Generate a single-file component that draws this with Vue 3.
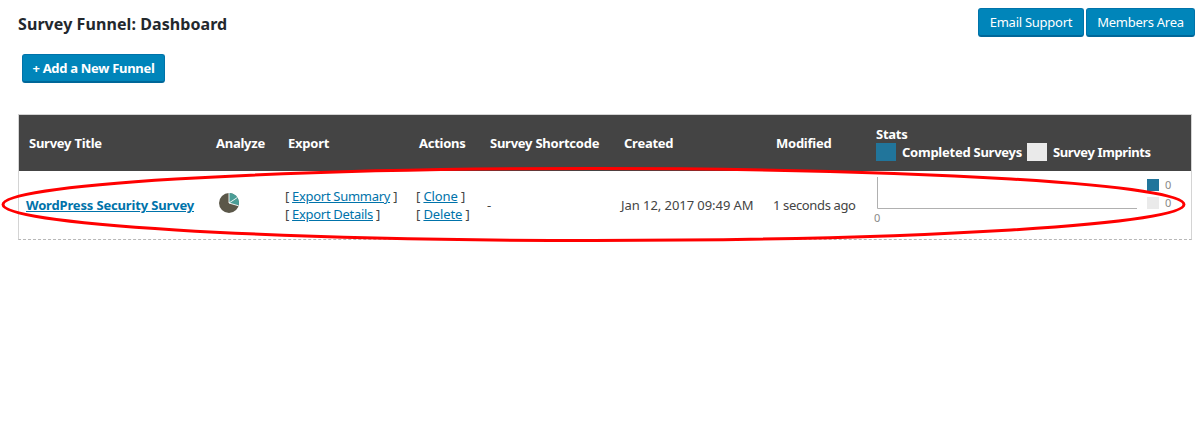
<script setup>
const columns = [
  { label: 'Survey Title', width: 187 },
  { label: 'Analyze', width: 72 },
  { label: 'Export', width: 131 },
  { label: 'Actions', width: 71 },
  { label: 'Survey Shortcode', width: 134 },
  { label: 'Created', width: 152 },
  { label: 'Modified', width: 100 },
]
</script>

<template>
  <div class="page">
    <header class="top">
      <h1 class="title">Survey Funnel: Dashboard</h1>
      <div class="top-actions">
        <a class="btn btn-email" href="#">Email Support</a>
        <a class="btn btn-members" href="#">Members Area</a>
      </div>
    </header>
    <div class="add-row">
      <a class="btn btn-strong" href="#">+ Add a New Funnel</a>
    </div>
    <div class="table-wrap">
      <table class="funnels">
        <colgroup>
          <col v-for="c in columns" :key="c.label" :style="{ width: c.width + 'px' }" />
          <col />
        </colgroup>
        <thead>
          <tr>
            <th v-for="c in columns" :key="c.label">{{ c.label }}</th>
            <th class="stats-head">
              <div>Stats</div>
              <div class="legend">
                <span class="swatch swatch-blue"></span><span class="legend-a">Completed Surveys</span>
                <span class="swatch swatch-grey"></span><span class="legend-b">Survey Imprints</span>
              </div>
            </th>
          </tr>
        </thead>
        <tbody>
          <tr>
            <td><a class="survey-link" href="#">WordPress Security Survey</a></td>
            <td class="pie-cell">
              <svg class="pie" width="22" height="22" viewBox="0 0 22 22">
                <circle cx="11" cy="11" r="10" fill="#5b5749" />
                <path d="M11 11 L11 1 A10 10 0 0 1 20.6 13.8 Z" fill="#4a9d96" />
                <path d="M11 1 V11 L19.2 5.6 M11 11 L20.6 13.8" fill="none" stroke="#fff" stroke-width="0.9" />
              </svg>
            </td>
            <td class="links">
              <div>[ <a href="#">Export Summary</a> ]</div>
              <div>[ <a href="#">Export Details</a> ]</div>
            </td>
            <td class="links links-wide">
              <div>[ <a href="#">Clone</a> ]</div>
              <div>[ <a href="#">Delete</a> ]</div>
            </td>
            <td>-</td>
            <td class="created">Jan 12, 2017 09:49 AM</td>
            <td class="modified">1 seconds ago</td>
            <td class="chart-cell">
              <svg class="chart" width="316" height="50" viewBox="0 0 316 50">
                <path d="M1.5 -3 V28.5 H261" fill="none" stroke="#b0b0b0" stroke-width="1" />
                <text x="-2" y="42" class="tick">0</text>
                <rect x="271" y="-1" width="12" height="12" fill="#21759b" />
                <rect x="271" y="17" width="12" height="12" fill="#eaeaea" />
                <text x="289" y="9" class="tick">0</text>
                <text x="289" y="27" class="tick">0</text>
              </svg>
            </td>
          </tr>
        </tbody>
      </table>
    </div>
    <svg class="annotation" width="1196" height="443" viewBox="0 0 1196 443">
      <ellipse cx="593.5" cy="204.5" rx="590.5" ry="36" fill="none" stroke="#f00" stroke-width="3" />
    </svg>
  </div>
</template>

<style scoped>
.page {
  position: relative;
  width: 1196px;
  height: 443px;
  overflow: hidden;
  background: #fff;
  color: #444;
  font-family: "Noto Sans", "Open Sans", sans-serif;
  font-size: 13px;
}
.top {
  display: flex;
  justify-content: space-between;
  align-items: flex-start;
  padding: 8px 1px 0 18px;
}
.title {
  margin: 5px 0 0;
  font-size: 16px;
  line-height: 22px;
  font-weight: 700;
  color: #23282d;
  letter-spacing: 0.08px;
}
.top-actions {
  display: flex;
  gap: 2px;
}
.btn {
  display: block;
  box-sizing: border-box;
  height: 29px;
  line-height: 27px;
  background: #0085ba;
  border: 1px solid #0073aa;
  border-bottom: 2px solid #006799;
  border-radius: 3px;
  color: #fff;
  font-size: 13px;
  text-align: center;
  text-decoration: none;
  white-space: nowrap;
  letter-spacing: -0.26px;
}
.btn-email { width: 106px; }
.btn-members { width: 109px; }
.btn-strong {
  font-weight: 700;
  width: 143px;
  letter-spacing: -0.3px;
}
.add-row {
  display: flex;
  padding: 17px 0 0 22px;
}
.table-wrap {
  margin: 31px 4px 0 18px;
  border: 1px solid #d4d4d4;
  border-bottom: 1px dashed #b8b8b8;
}
.funnels {
  width: 100%;
  table-layout: fixed;
  border-collapse: collapse;
}
th {
  height: 56px;
  box-sizing: border-box;
  padding: 0 0 0 10px;
  background: #444;
  color: #fff;
  font-size: 13px;
  font-weight: 700;
  text-align: left;
  white-space: nowrap;
  letter-spacing: -0.25px;
}
.stats-head {
  padding-bottom: 1px;
  line-height: 18px;
}
.legend {
  display: flex;
  align-items: center;
  height: 18px;
}
.swatch {
  flex: none;
  width: 20px;
  height: 18px;
}
.swatch-blue { background: #21759b; }
.swatch-grey { background: #eaeaea; }
.legend-a { margin: 0 5px 0 6px; width: 120px; }
.legend-b { margin-left: 6px; letter-spacing: -0.38px; }
td {
  height: 68px;
  box-sizing: border-box;
  padding: 0 0 0 7px;
  color: #444;
  font-size: 13px;
  white-space: nowrap;
  vertical-align: middle;
}
.created { letter-spacing: -0.06px; }
.modified { letter-spacing: -0.36px; }
.survey-link {
  color: #0073aa;
  font-weight: 700;
  text-decoration: underline;
  letter-spacing: -0.16px;
}
.links {
  line-height: 18px;
  letter-spacing: -0.3px;
}
.links-wide {
  letter-spacing: -0.12px;
}
.links a {
  color: #0073aa;
  text-decoration: underline;
}
.pie-cell {
  padding-left: 12px;
}
.pie {
  display: block;
  margin-top: -4px;
}
.chart-cell {
  padding: 0 0 0 10px;
}
.chart {
  display: block;
  overflow: visible;
}
.tick {
  font-size: 11px;
  fill: #888;
  font-family: "Noto Sans", sans-serif;
}
.annotation {
  position: absolute;
  left: 0;
  top: 0;
  pointer-events: none;
}
</style>

<style>
html, body { margin: 0; background: #fff; }
</style>
